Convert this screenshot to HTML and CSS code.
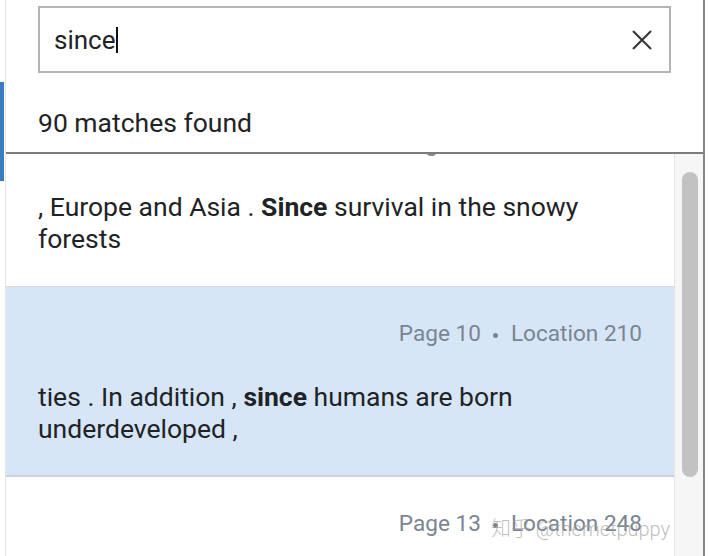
FILE: index.html
```html
<!DOCTYPE html>
<html lang="en">
<head>
<meta charset="utf-8">
<title>Search</title>
<link rel="stylesheet" href="styles.css">
</head>
<body>
<div class="page">
  <div class="rail"><div class="rail-mark"></div></div>
  <div class="panel">
    <div class="header">
      <div class="search">
        <span class="query">since</span><span class="caret"></span>
        <svg class="clear" width="22" height="22" viewBox="0 0 22 22"><path d="M2 2 L20 20 M20 2 L2 20" stroke="#333" stroke-width="2" fill="none"/></svg>
      </div>
      <div class="count">90 matches found</div>
    </div>
    <div class="results">
      <div class="list">
        <div class="list-inner">
          <div class="item">
            <div class="meta">Page 10<span class="dot"></span>Location 207</div>
            <div class="text">, Europe and Asia . <b>Since</b> survival in the snowy forests</div>
          </div>
          <div class="item selected">
            <div class="meta">Page 10<span class="dot"></span>Location 210</div>
            <div class="text">ties . In addition , <b>since</b> humans are born underdeveloped ,</div>
          </div>
          <div class="item">
            <div class="meta">Page 13<span class="dot"></span>Location 248</div>
            <div class="text">. Since then , humans have</div>
          </div>
        </div>
      </div>
      <div class="scrollbar"><div class="thumb"></div></div>
      <div class="watermark">知乎 @themetpuppy</div>
    </div>
  </div>
  <div class="edge"></div>
</div>
</body>
</html>
```

FILE: styles.css
```css
html, body {
  margin: 0;
  padding: 0;
  background: #fff;
}
body {
  width: 708px;
  height: 556px;
  overflow: hidden;
  font-family: Roboto, "Liberation Sans", "Noto Sans CJK SC", sans-serif;
  color: #1f2326;
}
.page {
  display: flex;
  height: 556px;
}
.rail {
  width: 5px;
  flex: none;
  border-right: 1px solid #e4e6e8;
}
.rail-mark {
  margin-top: 82px;
  height: 99px;
  width: 4px;
  background: #3a7cbf;
}
.panel {
  flex: 1;
  display: flex;
  flex-direction: column;
  border-right: 2px solid #858585;
  min-width: 0;
}
.edge {
  width: 3px;
  flex: none;
}
.header {
  padding-top: 6px;
  height: 154px;
  flex: none;
  box-sizing: border-box;
  border-bottom: 2px solid #7c7c7c;
}
.search {
  margin-left: 32px;
  width: 633px;
  height: 67px;
  box-sizing: border-box;
  border: 2px solid #b4b4b4;
  display: flex;
  align-items: center;
  padding-left: 14px;
  padding-right: 16px;
}
.query {
  font-size: 26px;
  line-height: 30px;
  color: #1f2326;
}
.caret {
  width: 2px;
  height: 26px;
  background: #111;
}
.clear {
  margin-left: auto;
}
.count {
  margin: 34px 0 0 32px;
  font-size: 26.5px;
  line-height: 32px;
  color: #1f2326;
}
.results {
  flex: 1;
  display: flex;
  min-height: 0;
  position: relative;
}
.list {
  flex: 1;
  overflow: hidden;
}
.list-inner {
  margin-top: -57px;
}
.item {
  padding: 33px 32px 31px 32px;
  border-bottom: 1px solid #d8dadc;
}
.item.selected {
  background: #d6e6f7;
  border-bottom: 2px solid #c9d3de;
  padding-bottom: 30px;
}
.meta {
  text-align: right;
  font-size: 22.6px;
  line-height: 28px;
  color: #7b8591;
}
.dot {
  display: inline-block;
  width: 5px;
  height: 5px;
  border-radius: 50%;
  background: #7b8591;
  vertical-align: middle;
  margin: 0 13px 0 12px;
}
.text {
  margin-top: 33px;
  font-size: 26.5px;
  line-height: 32px;
  color: #1f2326;
  padding-right: 60px;
}
.text b {
  font-weight: 700;
}
.watermark {
  position: absolute;
  left: 485px;
  top: 359px;
  font-size: 20px;
  font-weight: 300;
  color: rgba(160, 160, 160, 0.7);
  white-space: nowrap;
}
.scrollbar {
  width: 29px;
  flex: none;
  background: #f6f6f6;
  border-left: 1px solid #e6e6e6;
  padding: 18px 5px 0 7px;
  box-sizing: border-box;
}
.thumb {
  height: 305px;
  background: #c2c2c2;
  border-radius: 9px;
}
```
